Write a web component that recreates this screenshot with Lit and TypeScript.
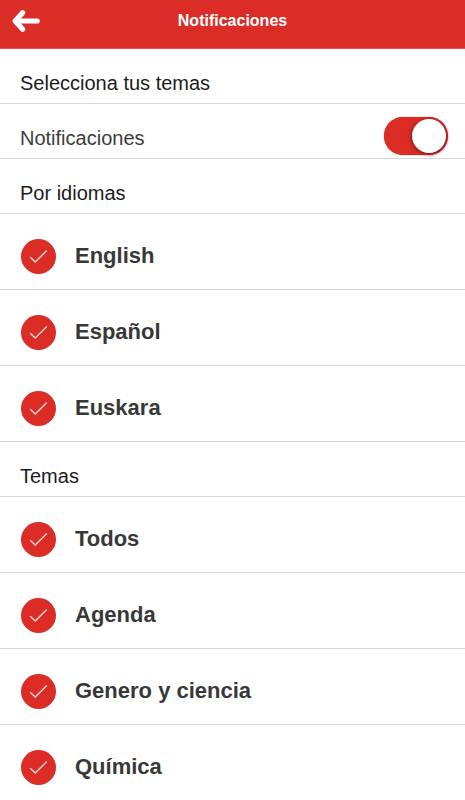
import { LitElement, html, css } from "lit";
import { customElement, property, state } from "lit/decorators.js";

@customElement("topic-row")
class TopicRow extends LitElement {
  @property() label = "";
  @property({ type: Boolean }) checked = false;

  static styles = css`
    :host {
      display: block;
      border-bottom: 1px solid #d4d4d4;
    }
    .row {
      display: flex;
      align-items: center;
      gap: 19px;
      box-sizing: border-box;
      height: 75px;
      padding: 10px 20px 0 21px;
      cursor: pointer;
    }
    .mark {
      display: grid;
      flex: none;
      width: 35px;
      height: 35px;
    }
    .mark > * {
      grid-area: 1 / 1;
    }
    .box {
      appearance: none;
      width: 35px;
      height: 35px;
      margin: 0;
      border-radius: 50%;
      background: #fff;
      box-shadow: inset 0 0 0 1px #c8c8c8;
      cursor: pointer;
    }
    .box:checked {
      background: #db2c26;
      box-shadow: none;
    }
    .tick {
      z-index: 1;
      width: 35px;
      height: 35px;
      pointer-events: none;
    }
    .name {
      padding-bottom: 2px;
      font-size: 22px;
      line-height: 26px;
      font-weight: bold;
      color: #383838;
    }
  `;

  render() {
    return html`<label class="row">
      <span class="mark">
        <input
          class="box"
          type="checkbox"
          .checked=${this.checked}
          @change=${(e: Event) => (this.checked = (e.target as HTMLInputElement).checked)}
        />
        <svg class="tick" viewBox="0 0 35 35" aria-hidden="true">
          <path d="M9.3 18.2 14.2 23 25.8 11.6" fill="none" stroke="#fbd9d5" stroke-width="1.4" />
        </svg>
      </span>
      <span class="name">${this.label}</span>
    </label>`;
  }
}

@customElement("app-root")
class AppRoot extends LitElement {
  @state() private enabled = true;

  private languages = ["English", "Español", "Euskara"];
  private topics = ["Todos", "Agenda", "Genero y ciencia", "Química"];

  static styles = css`
    :host {
      display: block;
      font-family: "Liberation Sans", Arial, Helvetica, sans-serif;
      background: #fff;
      color: #1c1c1c;
    }
    .bar {
      display: grid;
      grid-template-columns: 52px 1fr 52px;
      align-items: center;
      box-sizing: border-box;
      height: 49px;
      padding-bottom: 7px;
      background: #db2d27;
      border-bottom: 1px solid #e2524b;
    }
    .back {
      display: flex;
      align-items: center;
      height: 41px;
      margin: 0;
      padding: 0 0 0 12px;
      border: 0;
      background: none;
      cursor: pointer;
    }
    .title {
      margin: 0;
      text-align: center;
      font-size: 16px;
      line-height: 20px;
      font-weight: bold;
      color: #fff;
    }
    .line {
      display: flex;
      align-items: center;
      justify-content: space-between;
      box-sizing: border-box;
      height: 55px;
      margin: 0;
      padding: 13px 17px 0 20px;
      border-bottom: 1px solid #d8d8d8;
      font-size: 20px;
      line-height: 24px;
      font-weight: normal;
    }
    .setting {
      padding-top: 10px;
      color: #3c3c3c;
      cursor: pointer;
    }
    .caption {
      padding-top: 3px;
    }
    .switch {
      appearance: none;
      display: flex;
      align-items: center;
      box-sizing: border-box;
      width: 64px;
      height: 38px;
      margin: 0;
      padding: 0 2px;
      border-radius: 19px;
      background: #c8c8c8;
      box-shadow: 0 0 1px #b8201b;
      cursor: pointer;
    }
    .switch::before {
      content: "";
      width: 34px;
      height: 34px;
      border-radius: 50%;
      background: #fff;
      box-shadow: 0 1px 4px rgba(60, 0, 0, 0.7);
    }
    .switch:checked {
      justify-content: flex-end;
      background: #db2c26;
    }
  `;

  render() {
    return html`
      <header class="bar">
        <button class="back" type="button" aria-label="Volver">
          <svg width="28" height="24" viewBox="0 0 28 24" aria-hidden="true">
            <path
              d="M25.2 12H4M10.6 3.7 3.2 12 10.6 20.3"
              fill="none"
              stroke="#fff"
              stroke-width="5.2"
              stroke-linecap="round"
              stroke-linejoin="round"
            />
          </svg>
        </button>
        <h1 class="title">Notificaciones</h1>
      </header>
      <main>
        <h2 class="line">Selecciona tus temas</h2>
        <label class="line setting">
          <span class="caption">Notificaciones</span>
          <input
            class="switch"
            type="checkbox"
            role="switch"
            .checked=${this.enabled}
            @change=${(e: Event) => (this.enabled = (e.target as HTMLInputElement).checked)}
          />
        </label>
        <h2 class="line">Por idiomas</h2>
        ${this.languages.map((name) => html`<topic-row .label=${name} .checked=${true}></topic-row>`)}
        <h2 class="line">Temas</h2>
        ${this.topics.map((name) => html`<topic-row .label=${name} .checked=${true}></topic-row>`)}
      </main>
    `;
  }
}
